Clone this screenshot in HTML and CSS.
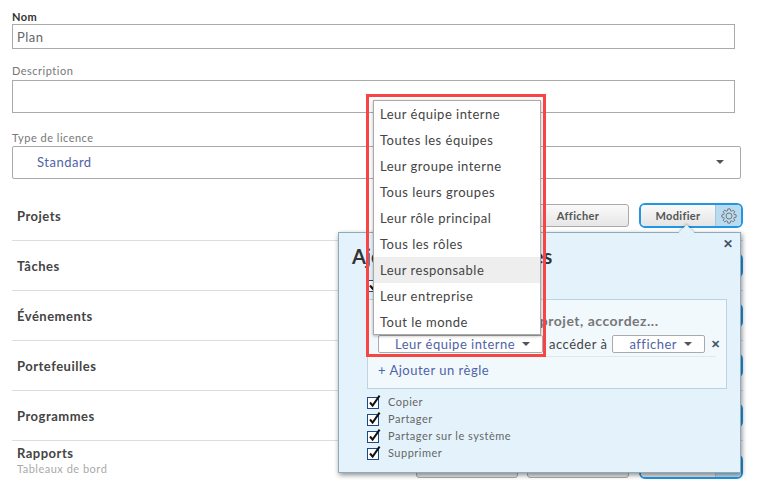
FILE: index.html
```html
<!DOCTYPE html>
<html>
<head>
<meta charset="utf-8">
<title>Plan</title>
<link rel="stylesheet" href="styles.css">
</head>
<body>
<div class="page">
	<label class="lbl lbl-strong">Nom</label>
	<input class="txt" type="text" value="Plan">
	<label class="lbl lbl-desc">Description</label>
	<textarea class="area"></textarea>
	<label class="lbl lbl-type">Type de licence</label>
	<div class="sel-wide"><span>Standard</span><i class="caret"></i></div>

	<div class="row row-first">
		<div class="row-name">Projets</div>
		<div class="btns"><a class="btn">Aucun</a><a class="btn">Afficher</a>
			<div class="btn-group"><a class="btn-on">Modifier</a><a class="btn-gear">
				<svg width="16" height="16" viewBox="0 0 16 16"><path class="gear" d="M13.16 6.42L15.11 6.87V9.13L13.16 9.58L12.77 10.54L13.82 12.23L12.23 13.82L10.54 12.77L9.58 13.16L9.13 15.11H6.87L6.42 13.16L5.46 12.77L3.77 13.82L2.18 12.23L3.23 10.54L2.84 9.58L.89 9.13V6.87L2.84 6.42L3.23 5.46L2.18 3.77L3.77 2.18L5.46 3.23L6.42 2.84L6.87 .89H9.13L9.58 2.84L10.54 3.23L12.23 2.18L13.82 3.77L12.77 5.46Z"/><circle class="gear" cx="8" cy="8" r="3"/></svg>
			</a></div>
		</div>
	</div>
	<div class="row">
		<div class="row-name">Tâches</div>
		<div class="btns"><a class="btn">Aucun</a><a class="btn">Afficher</a><div class="btn-group"><a class="btn-on">Modifier</a><a class="btn-gear"></a></div></div>
	</div>
	<div class="row">
		<div class="row-name">Événements</div>
		<div class="btns"><a class="btn">Aucun</a><a class="btn">Afficher</a><div class="btn-group"><a class="btn-on">Modifier</a><a class="btn-gear"></a></div></div>
	</div>
	<div class="row">
		<div class="row-name">Portefeuilles</div>
		<div class="btns"><a class="btn">Aucun</a><a class="btn">Afficher</a><div class="btn-group"><a class="btn-on">Modifier</a><a class="btn-gear"></a></div></div>
	</div>
	<div class="row">
		<div class="row-name">Programmes</div>
		<div class="btns"><a class="btn">Aucun</a><a class="btn">Afficher</a><div class="btn-group"><a class="btn-on">Modifier</a><a class="btn-gear"></a></div></div>
	</div>
	<div class="row row-last">
		<div class="row-name">Rapports<small>Tableaux de bord</small></div>
		<div class="btns"><a class="btn">Aucun</a><a class="btn">Afficher</a><div class="btn-group"><a class="btn-on">Modifier</a><a class="btn-gear"></a></div></div>
	</div>
</div>

<div class="pop">
	<i class="pop-tip"></i>
	<span class="pop-x">&#10005;</span>
	<h2>Ajouter d'autres règles</h2>
	<div class="chk chk-top"><svg class="tick" width="14" height="15" viewBox="0 0 14 15"><rect x=".5" y="3.5" width="11" height="11" fill="#fff" stroke="#1c4a86"/><path d="M3 8.5L5.6 11.6L12.6 1.6" fill="none" stroke="#111" stroke-width="2"/></svg><span>Tout le monde</span></div>
	<div class="rules">
		<div class="rules-title">Pour les membres de ce projet, accordez...</div>
		<div class="rule">
			<div class="sel sel-who">Leur équipe interne<i class="caret"></i></div>
			<span class="rule-to">accéder à</span>
			<div class="sel sel-what">afficher<i class="caret"></i></div>
			<span class="rule-x">&#10005;</span>
		</div>
		<a class="rule-add">+ Ajouter un règle</a>
	</div>
	<div class="chk"><svg class="tick" width="14" height="15" viewBox="0 0 14 15"><rect x=".5" y="3.5" width="11" height="11" fill="#fff" stroke="#1c4a86"/><path d="M3 8.5L5.6 11.6L12.6 1.6" fill="none" stroke="#111" stroke-width="2"/></svg><span>Copier</span></div>
	<div class="chk"><svg class="tick" width="14" height="15" viewBox="0 0 14 15"><rect x=".5" y="3.5" width="11" height="11" fill="#fff" stroke="#1c4a86"/><path d="M3 8.5L5.6 11.6L12.6 1.6" fill="none" stroke="#111" stroke-width="2"/></svg><span>Partager</span></div>
	<div class="chk"><svg class="tick" width="14" height="15" viewBox="0 0 14 15"><rect x=".5" y="3.5" width="11" height="11" fill="#fff" stroke="#1c4a86"/><path d="M3 8.5L5.6 11.6L12.6 1.6" fill="none" stroke="#111" stroke-width="2"/></svg><span>Partager sur le système</span></div>
	<div class="chk"><svg class="tick" width="14" height="15" viewBox="0 0 14 15"><rect x=".5" y="3.5" width="11" height="11" fill="#fff" stroke="#1c4a86"/><path d="M3 8.5L5.6 11.6L12.6 1.6" fill="none" stroke="#111" stroke-width="2"/></svg><span>Supprimer</span></div>
</div>

<div class="menu">
	<div>Leur équipe interne</div>
	<div>Toutes les équipes</div>
	<div>Leur groupe interne</div>
	<div>Tous leurs groupes</div>
	<div>Leur rôle principal</div>
	<div>Tous les rôles</div>
	<div class="menu-hover">Leur responsable</div>
	<div>Leur entreprise</div>
	<div>Tout le monde</div>
</div>
<div class="redbox"></div>
</body>
</html>
```

FILE: styles.css
```css
html, body {
margin:0;
height:504px;
overflow:hidden;
background-color:#ffffff;
}
body {
font-family:Lato,"Liberation Sans",sans-serif;
color:#444444;
letter-spacing:.5px;
}
.page {
padding:9px 0 0 12px;
width:731px;
}
.lbl {
display:block;
font-size:11px;
line-height:15px;
color:#777777;
}
.lbl-strong {
font-weight:bold;
color:#333333;
}
.lbl-desc {
margin-top:14px;
}
.lbl-type {
margin-top:17px;
}
.txt, .area {
display:block;
box-sizing:border-box;
width:723px;
margin:0;
padding:0 4px;
border:1px solid #aaaaaa;
border-radius:0;
outline:none;
font-family:inherit;
font-size:13px;
letter-spacing:inherit;
color:#666666;
background-color:#ffffff;
}
.txt {
height:25px;
}
.area {
height:33px;
margin-top:2px;
resize:none;
}
.sel-wide {
box-sizing:border-box;
display:flex;
align-items:center;
justify-content:space-between;
width:729px;
height:33px;
margin-top:1px;
padding:0 16px 2px 24px;
border:1px solid #aaaaaa;
border-radius:2px;
font-size:13px;
color:#4f63a8;
}
.caret {
display:inline-block;
width:0;
height:0;
border-style:solid;
border-width:4px 4px 0 4px;
border-color:#555555 transparent transparent transparent;
}
.row {
box-sizing:border-box;
display:flex;
align-items:center;
justify-content:space-between;
width:731px;
height:50px;
padding-left:5px;
border-bottom:1px solid #dddddd;
}
.row-first {
margin-top:12px;
}
.row-last {
border-bottom:none;
}
.row-name {
font-size:13px;
font-weight:bold;
color:#444444;
}
.row-last .row-name {
padding-bottom:12px;
}
.row-name small {
display:block;
margin-top:1px;
font-size:11px;
font-weight:normal;
color:#aaaaaa;
}
.btns {
display:flex;
align-items:center;
gap:9px;
letter-spacing:.35px;
}
.btn {
box-sizing:border-box;
width:102px;
height:23px;
border:1px solid #aaaaaa;
border-radius:3px;
background:linear-gradient(#fafafa,#e6e6e6);
font-size:11px;
font-weight:bold;
line-height:21px;
text-align:center;
color:#555555;
}
.btn-group {
box-sizing:border-box;
display:flex;
width:104px;
height:25px;
margin-left:1px;
border:2px solid #2196e3;
border-radius:6px;
overflow:hidden;
}
.btn-on {
flex:1;
background:linear-gradient(#fafafa,#e4e4e4);
font-size:11px;
font-weight:bold;
line-height:21px;
text-align:center;
color:#555555;
}
.btn-gear {
display:flex;
align-items:center;
justify-content:center;
width:25px;
border-left:1px solid #aac4d6;
background-color:#b9dbf1;
}
.gear {
fill:none;
stroke:#777777;
}
.pop {
position:absolute;
left:338px;
top:232px;
box-sizing:border-box;
width:403px;
height:241px;
padding:0 13px 0 28px;
border:1px solid #8eaabd;
background-color:#e4f3fb;
box-shadow:1px 2px 5px rgba(0,0,0,.45);
}
.pop h2 {
margin:11px 0 0 -15px;
font-size:20px;
line-height:24px;
font-weight:bold;
letter-spacing:0;
color:#333333;
white-space:nowrap;
}
.pop-tip {
position:absolute;
left:342px;
top:-6px;
width:11px;
height:11px;
background-color:#e4f3fb;
transform:rotate(45deg);
box-shadow:-1px -1px 2px rgba(0,0,0,.2);
}
.pop-x {
position:absolute;
right:7px;
top:3px;
font-size:12px;
font-weight:bold;
color:#445566;
}
.chk {
display:flex;
align-items:flex-end;
height:17px;
font-size:11px;
color:#666666;
}
.chk span {
margin-left:7px;
line-height:14px;
}
.chk-top {
margin-top:9px;
height:15px;
}
.rules {
box-sizing:border-box;
width:360px;
height:90px;
margin:7px 0 3px 0;
padding:12px 10px 0 10px;
border:1px solid #bcd3e2;
background-color:#f1f9fd;
}
.rules-title {
font-size:14px;
line-height:18px;
font-weight:bold;
color:#777777;
white-space:nowrap;
}
.rule {
display:flex;
align-items:center;
width:338px;
height:21px;
margin-top:3px;
border-bottom:1px solid #dde8ef;
padding-bottom:2px;
font-size:13px;
color:#444444;
white-space:nowrap;
}
.sel {
box-sizing:border-box;
display:flex;
align-items:center;
justify-content:space-between;
height:18px;
padding:0 12px 0 16px;
border:1px solid #aaaaaa;
border-radius:2px;
background-color:#ffffff;
color:#4f63a8;
}
.sel-who {
width:165px;
flex:none;
}
.sel-what {
width:93px;
flex:none;
}
.rule-to {
margin:0 5px 0 6px;
}
.rule-x {
margin-left:6px;
font-size:11px;
font-weight:bold;
color:#445566;
}
.rule-add {
display:block;
margin-top:4px;
font-size:13px;
line-height:18px;
color:#4f63a8;
}
.menu {
position:absolute;
left:373px;
top:100px;
box-sizing:border-box;
width:168px;
height:235px;
border:1px solid #aaaaaa;
background-color:#ffffff;
box-shadow:0 1px 3px rgba(0,0,0,.3);
font-size:13px;
color:#444444;
}
.menu div {
height:26px;
padding-left:6px;
line-height:26px;
}
.menu-hover {
background-color:#eeeeee;
}
.redbox {
position:absolute;
left:366px;
top:94px;
box-sizing:border-box;
width:180px;
height:263px;
border:3px solid #f94444;
}
```
